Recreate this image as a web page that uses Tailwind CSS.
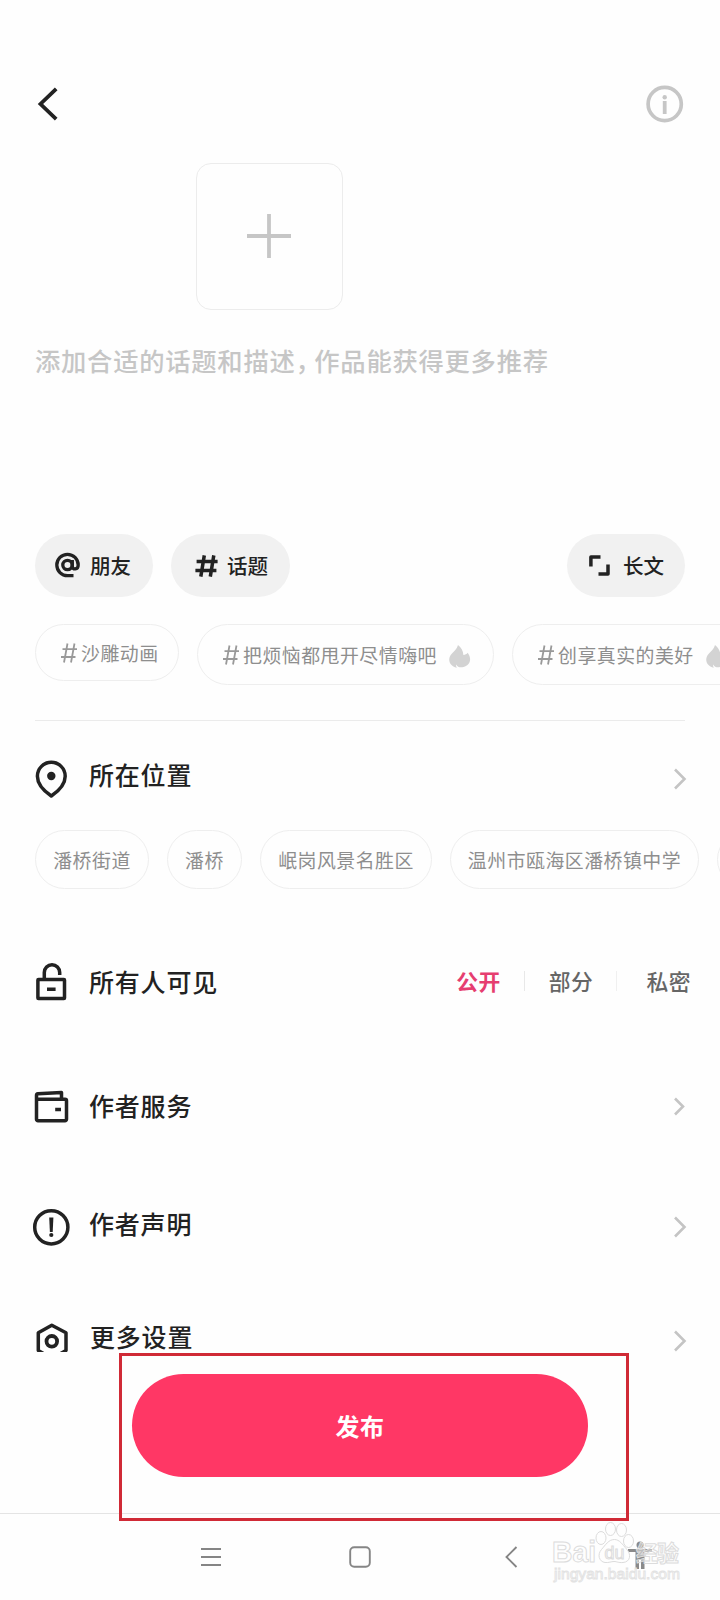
<!DOCTYPE html>
<html lang="zh-CN">
<head>
<meta charset="utf-8">
<title>发布</title>
<script src="https://cdn.jsdelivr.net/npm/@tailwindcss/browser@4"></script>
</head>
<body class="bg-[#fefefe]">
<div class="relative flex h-[1600px] w-[720px] flex-col overflow-hidden bg-[#fefefe] font-['Noto_Sans_CJK_SC',sans-serif] font-medium text-[#222]">

  <header class="flex h-[163px] items-start justify-between pt-[84px] pr-[35px] pl-[36px]">
    <svg class="h-10 w-6" viewBox="0 0 24 40" fill="none" stroke="#222" stroke-width="3.8"><path d="M20.200 4.800 4.500 20l15.700 15.200"/></svg>
    <svg class="h-10 w-10" viewBox="0 0 40 40" fill="none" stroke="#c6c6c6"><circle cx="19.700" cy="20" r="16.600" stroke-width="3.700"/><path d="M19.700 17v13" stroke-width="3.800"/><circle cx="19.700" cy="13.200" r="2.200" fill="#c6c6c6" stroke="none"/></svg>
  </header>

  <div class="ml-[196px] flex h-[147px] w-[147px] shrink-0 items-center justify-center rounded-[15px] border border-[#ececec] pr-[2px] pb-px">
    <svg class="h-11 w-11" viewBox="0 0 44 44" stroke="#c6c6c6" stroke-width="3.800"><path d="M22 0v44M0 22h44"/></svg>
  </div>

  <p class="mt-[30px] ml-[35px] flex h-[40px] items-center text-[25.300px] leading-[40px] tracking-[.750px] whitespace-nowrap text-[#c6c6c6]">添加合适的话题和描述<span class="tracking-[-6.500px]">，</span>作品能获得更多推荐</p>

  <div class="mt-[154px] flex h-[63px] shrink-0 items-center px-[35px] text-[20.500px]">
    <button class="flex h-[63px] w-[118px] items-center rounded-full bg-[#f1f1f1] pl-[20px]">
      <svg class="mb-[2px] h-[26px] w-[26px]" viewBox="0 0 26 26" fill="none" stroke="#222" stroke-width="3.3"><circle cx="12.500" cy="13" r="4.700"/><path d="M17.300 8v6.200c0 4 5.900 3.700 5.900-1.200A10.700 10.700 0 1 0 12.500 23.700h6"/></svg>
      <span class="mb-px ml-[9px]">朋友</span>
    </button>
    <button class="ml-[18px] flex h-[63px] w-[119px] items-center rounded-full bg-[#f1f1f1] pl-[24px]">
      <svg class="h-[22px] w-[23px]" viewBox="0 0 23 22" fill="none" stroke="#222" stroke-width="3.500"><path d="M9.300.4 5.800 21.600M18.800.4l-3.500 21.200M1.600 6.600h21M.4 15.400h21"/></svg>
      <span class="mb-px ml-[9px]">话题</span>
    </button>
    <button class="ml-auto flex h-[63px] w-[118px] items-center rounded-full bg-[#f1f1f1] pl-[22px]">
      <svg class="h-[21px] w-[21px]" viewBox="0 0 21 21" fill="none" stroke="#222" stroke-width="3.500" stroke-linejoin="round"><path d="M1.900 11.500V2H11.500M19 9.500V19H9.500"/></svg>
      <span class="mb-px ml-[13px]">长文</span>
    </button>
  </div>

  <div class="mt-[27px] flex h-[61px] shrink-0 items-start gap-[18px] overflow-hidden pl-[35px] text-[18.900px] font-normal tracking-[.500px] text-[#8e8e8e]">
    <div class="flex h-[57px] w-[144px] shrink-0 items-center rounded-full border border-[#eee] pl-[25px]">
      <svg class="h-[20px] w-[16px]" viewBox="0 0 16 20" fill="none" stroke="#999" stroke-width="1.800"><path d="M6.500.5 3 19.500M13.500.5 10 19.500M1.500 6.200H16M0 14h14.500"/></svg>
      <span class="mt-[2px] ml-[4px] whitespace-nowrap">沙雕动画</span>
    </div>
    <div class="flex h-[61px] w-[297px] shrink-0 items-center rounded-full border border-[#eee] pl-[25px]">
      <svg class="h-[20px] w-[16px]" viewBox="0 0 16 20" fill="none" stroke="#999" stroke-width="1.800"><path d="M6.500.5 3 19.500M13.500.5 10 19.500M1.500 6.200H16M0 14h14.500"/></svg>
      <span class="mt-[2px] ml-[4px] whitespace-nowrap">把烦恼都甩开尽情嗨吧</span>
      <svg class="mt-[4px] ml-[12px] h-[23px] w-[22px]" viewBox="0 0 22 23" fill="#d3d3d3"><path d="M9 0c3 2.600 5.200 5.500 5.400 10 1.800-.2 3.200-1 4.300-2.300C23 13.500 21.500 20.500 14.500 22c-3.500.8-5.800 0-7.500-2.600-.2 1.200.1 2.300.8 3.400C-.5 20.500-1.500 13.500 2.500 9 5 6.200 8 4 9 0Z"/></svg>
    </div>
    <div class="flex h-[61px] w-[260px] shrink-0 items-center rounded-full border border-[#eee] pl-[25px]">
      <svg class="h-[20px] w-[16px]" viewBox="0 0 16 20" fill="none" stroke="#999" stroke-width="1.800"><path d="M6.500.5 3 19.500M13.500.5 10 19.500M1.500 6.200H16M0 14h14.500"/></svg>
      <span class="mt-[2px] ml-[4px] whitespace-nowrap">创享真实的美好</span>
      <svg class="mt-[4px] ml-[12px] h-[23px] w-[22px]" viewBox="0 0 22 23" fill="#d3d3d3"><path d="M9 0c3 2.600 5.200 5.500 5.400 10 1.800-.2 3.200-1 4.300-2.300C23 13.500 21.500 20.500 14.500 22c-3.500.8-5.800 0-7.500-2.600-.2 1.200.1 2.300.8 3.400C-.5 20.500-1.500 13.500 2.500 9 5 6.200 8 4 9 0Z"/></svg>
    </div>
  </div>
  <div class="mx-[35px] mt-[35px] h-px shrink-0 bg-[#ebebeb]"></div>

  <section class="mt-[34px] flex h-[48px] shrink-0 items-center pr-[33px] pl-[31px]">
    <svg class="mb-px h-10 w-10" viewBox="0 0 40 40" fill="none" stroke="#222" stroke-width="3.500"><path d="M20.300 37C13 32 6.400 25.500 6.400 17.200a13.900 13.900 0 0 1 27.800 0C34.200 25.500 27.600 32 20.300 37Z" stroke-linejoin="round"/><circle cx="20.300" cy="17" r="4.200" fill="#222" stroke="none"/></svg>
    <h2 class="-mt-[8px] ml-[18px] text-[25px] tracking-[.800px]">所在位置</h2>
    <svg class="ml-auto h-[22px] w-[14px]" viewBox="0 0 14 22" fill="none" stroke="#c4c4c4" stroke-width="2.600"><path d="M2 1.500 11.500 11 2 20.500"/></svg>
  </section>

  <div class="mt-[27px] flex h-[60px] shrink-0 items-start gap-[18px] overflow-hidden pl-[35px] text-[18.900px] font-normal tracking-[.500px] whitespace-nowrap text-[#8e8e8e]">
    <div class="flex h-[59px] w-[114px] shrink-0 items-center justify-center rounded-full border border-[#eee] pt-[2px]">潘桥街道</div>
    <div class="flex h-[59px] w-[75px] shrink-0 items-center justify-center rounded-full border border-[#eee] pt-[2px]">潘桥</div>
    <div class="flex h-[59px] w-[172px] shrink-0 items-center justify-center rounded-full border border-[#eee] pt-[2px]">岷岗风景名胜区</div>
    <div class="flex h-[59px] w-[249px] shrink-0 items-center justify-center rounded-full border border-[#eee] pt-[2px]">温州市瓯海区潘桥镇中学</div>
    <div class="h-[59px] w-[114px] shrink-0 rounded-full border border-[#eee]"></div>
  </div>

  <section class="mt-[67px] flex h-[50px] shrink-0 items-center pr-[29px] pl-[31px]">
    <svg class="h-10 w-10" viewBox="0 0 40 40" fill="none" stroke="#222" stroke-width="3.500"><rect x="6.900" y="17.500" width="26.600" height="19" rx=".6"/><path d="M13.300 18v-7.500a7.700 7.700 0 0 1 15.400 0V13M16 27.300h8.600"/></svg>
    <h2 class="ml-[18px] text-[25px] tracking-[.800px]">所有人可见</h2>
    <div class="mb-[2px] ml-auto flex items-center text-[21.800px] tracking-[.500px] text-[#666]">
      <span class="font-bold text-[#e63e70]">公开</span>
      <i class="ml-[23px] h-[20px] w-px bg-[#e8e8e8]"></i>
      <span class="ml-[24px]">部分</span>
      <i class="ml-[23px] h-[20px] w-px bg-[#f0f0f0]"></i>
      <span class="ml-[29px]">私密</span>
    </div>
  </section>

  <section class="mt-[75px] flex h-[48px] shrink-0 items-center pr-[33px] pl-[31px]">
    <svg class="h-10 w-10" viewBox="0 0 40 40" fill="none" stroke="#222" stroke-width="3.500" stroke-linejoin="round"><path d="M5.500 13.200h28.500a1.500 1.500 0 0 1 1.500 1.500v18.500a1.500 1.500 0 0 1-1.500 1.500H7a1.500 1.500 0 0 1-1.500-1.500V9.500A1.700 1.700 0 0 1 7 7.800L30.500 6.500v6M24.200 23.500h5.800"/></svg>
    <h2 class="ml-[18px] text-[25px] tracking-[.800px]">作者服务</h2>
    <svg class="mr-[2px] ml-auto h-[19px] w-[12px]" viewBox="0 0 12 19" fill="none" stroke="#c4c4c4" stroke-width="2.600"><path d="M2 1.500 10 9.500 2 17.500"/></svg>
  </section>

  <section class="mt-[73px] flex h-[48px] shrink-0 items-center pr-[33px] pl-[31px]">
    <svg class="h-10 w-10" viewBox="0 0 40 40" fill="none" stroke="#222" stroke-width="3.500"><circle cx="20.300" cy="20.300" r="16.600"/><path d="M18.200 10.500h4.200L21.700 25h-2.800Z" fill="#222" stroke="none"/><circle cx="20.300" cy="28" r="2.100" fill="#222" stroke="none"/></svg>
    <h2 class="-mt-[7px] ml-[18px] text-[25px] tracking-[.800px]">作者声明</h2>
    <svg class="ml-auto h-[22px] w-[14px]" viewBox="0 0 14 22" fill="none" stroke="#c4c4c4" stroke-width="2.600"><path d="M2 1.500 11.500 11 2 20.500"/></svg>
  </section>

  <section class="mt-[67px] flex h-[34px] shrink-0 items-start overflow-hidden pr-[33px] pl-[31px]">
    <svg class="mt-[3px] h-10 w-10 shrink-0" viewBox="0 0 40 40" fill="none" stroke="#222" stroke-width="3.500"><path d="M20.800 4.300 35 11.800V29.500L20.800 37.500 7.300 29.500V11.800Z" stroke-linejoin="round"/><circle cx="20.800" cy="20.300" r="5.300" stroke-width="3.800"/></svg>
    <h2 class="mt-[3px] ml-[19px] text-[25px] leading-[30px] tracking-[.800px]">更多设置</h2>
    <svg class="mt-[12px] ml-auto h-[22px] w-[14px]" viewBox="0 0 14 22" fill="none" stroke="#c4c4c4" stroke-width="2.600"><path d="M2 1.500 11.500 11 2 20.500"/></svg>
  </section>

  <footer class="flex h-[162px] shrink-0 items-start border-b border-[#e4e4e4] pt-[22px] pl-[132px]">
    <button class="h-[103px] w-[456px] rounded-full bg-[#ff3765] text-[24px] leading-[102px] font-bold tracking-[.500px] text-white">发布</button>
  </footer>

  <nav class="flex h-[86px] shrink-0 items-center pl-[200px]">
    <svg class="h-[22px] w-[22px]" viewBox="0 0 22 22" stroke="#858585" stroke-width="1.800"><path d="M1 3h20M1 11h20M1 19h20"/></svg>
    <svg class="ml-[127px] h-[22px] w-[22px]" viewBox="0 0 22 22" fill="none" stroke="#858585" stroke-width="1.900"><rect x="1.200" y="1.200" width="19.600" height="19.600" rx="4"/></svg>
    <svg class="ml-[134px] h-[22px] w-[13px]" viewBox="0 0 13 22" fill="none" stroke="#858585" stroke-width="1.900"><path d="M11.500 1 1.500 11l10 10"/></svg>
    <svg class="-mt-[5px] ml-[109px] h-[28px] w-[26px]" viewBox="0 0 26 28" fill="#8a8a8a"><path d="M1 8h24v3h-7.500v17H14v-9h-2v9H8.500V11H1Z"/><circle cx="13" cy="4" r="3.500"/></svg>
  </nav>

  <!-- Highlight frame around the publish button -->
  <div class="absolute top-[1353px] left-[119px] h-[168px] w-[510px] border-[3px] border-[#d02a36]"></div>

  <!-- Watermark -->
  <svg class="absolute top-[1518px] left-[548px] h-[70px] w-[140px]" viewBox="548 1518 140 70" fill="#fefefe" fill-opacity=".45" stroke="#dcdcdc" stroke-width="1" font-family="Liberation Sans, sans-serif">
    <ellipse cx="601" cy="1538" rx="5" ry="6.500"/><ellipse cx="610.500" cy="1529" rx="5" ry="6.500"/><ellipse cx="621.500" cy="1530" rx="5" ry="6.500"/><ellipse cx="628.500" cy="1541" rx="5" ry="6.500"/>
    <path d="M614.500 1539.500c5 0 8 5 12 9.500 5 5 4 13-3.500 13.500-5 .4-6-1-9-1s-5 1.400-9 1c-6-.8-8-8-3.500-13 4-4.500 7-10 13-10Z"/>
    <text x="552" y="1562" font-size="29" font-weight="bold" textLength="44" lengthAdjust="spacingAndGlyphs">Bai</text>
    <text x="604.500" y="1559" font-size="18" textLength="20" lengthAdjust="spacingAndGlyphs">du</text>
    <text x="636" y="1561" font-size="22" font-weight="bold" textLength="43" font-family="Noto Sans CJK SC, sans-serif">经验</text>
    <text x="554" y="1579" font-size="15.500" textLength="126" lengthAdjust="spacingAndGlyphs" stroke="#e2e2e2" stroke-width=".9">jingyan.baidu.com</text>
  </svg>
</div>
</body>
</html>
